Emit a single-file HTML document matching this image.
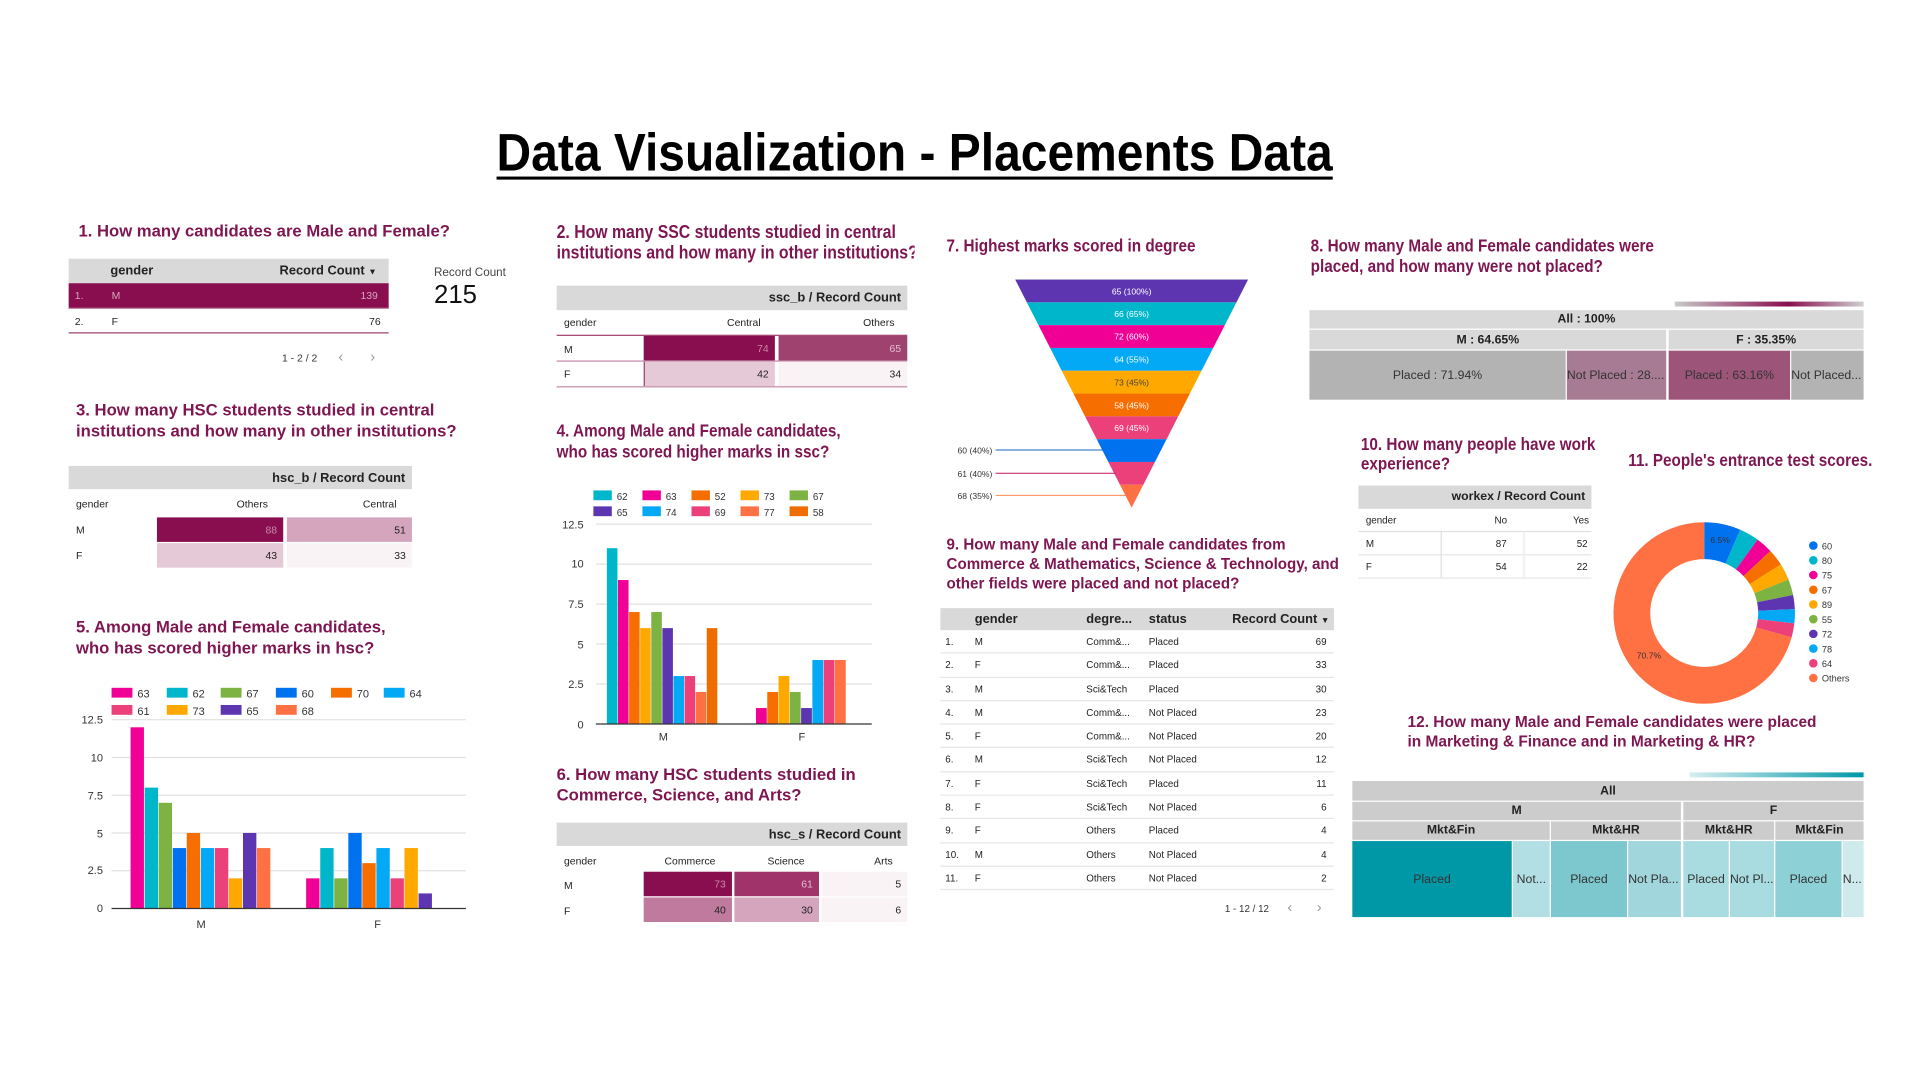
<!DOCTYPE html>
<html><head><meta charset="utf-8">
<style>
html,body{margin:0;padding:0;background:#fff;overflow:hidden;width:1920px;height:1080px}
#c{position:absolute;left:0;top:0;width:1566px;height:881px;transform:scale(1.22605);transform-origin:0 0;font-family:"Liberation Sans",Arial,sans-serif;color:#222}
.a{position:absolute;white-space:nowrap}
.h{position:absolute;color:#7e1651;font-weight:bold;font-size:13.6px;line-height:17px;white-space:nowrap}
.hc{transform:scaleX(0.86);transform-origin:0 0}
.hdr{position:absolute;background:#d9d9d9}
.t9{font-size:8.5px}
.b11{font-weight:bold;font-size:10.5px}
.r{text-align:right}
.cell{position:absolute;font-size:8.5px;text-align:right;box-sizing:border-box;padding-right:5px}
.tm{position:absolute;font-size:10px;color:#333;text-align:center;box-sizing:border-box;overflow:hidden;display:flex;align-items:center;justify-content:center}
</style></head><body>
<div id="c">
<svg class="a" style="left:0;top:0" width="1566" height="881" viewBox="0 0 1566 881" font-family="Liberation Sans, Arial, sans-serif">
<text x="405" y="139" font-size="43" font-weight="bold" textLength="682" lengthAdjust="spacingAndGlyphs" fill="#000">Data Visualization - Placements Data</text>
<rect x="405" y="144" width="682" height="2.5" fill="#000"/>

<g stroke="#e0e0e0" stroke-width="1">
<line x1="91" y1="587" x2="380" y2="587"/><line x1="91" y1="617.8" x2="380" y2="617.8"/><line x1="91" y1="648.6" x2="380" y2="648.6"/><line x1="91" y1="679.4" x2="380" y2="679.4"/><line x1="91" y1="710.2" x2="380" y2="710.2"/>
</g>
<g font-size="9" fill="#333" text-anchor="end">
<text x="84" y="590">12.5</text><text x="84" y="621">10</text><text x="84" y="652">7.5</text><text x="84" y="683">5</text><text x="84" y="713">2.5</text><text x="84" y="744">0</text>
</g>
<g>
<rect x="106.5" y="593.2" width="10.9" height="147.8" fill="#f10096"/>
<rect x="118" y="642.4" width="10.9" height="98.6" fill="#00b6cb"/>
<rect x="129.4" y="654.8" width="10.9" height="86.2" fill="#7cb342"/>
<rect x="140.9" y="691.7" width="10.9" height="49.3" fill="#0072f0"/>
<rect x="152.3" y="679.4" width="10.9" height="61.6" fill="#f66d00"/>
<rect x="163.8" y="691.7" width="10.9" height="49.3" fill="#03a9f4"/>
<rect x="175.3" y="691.7" width="10.9" height="49.3" fill="#ec407a"/>
<rect x="186.7" y="716.4" width="10.9" height="24.6" fill="#ffa800"/>
<rect x="198.2" y="679.4" width="10.9" height="61.6" fill="#5e35b1"/>
<rect x="209.6" y="691.7" width="10.9" height="49.3" fill="#ff7043"/>
<rect x="249.7" y="716.4" width="10.9" height="24.6" fill="#f10096"/>
<rect x="261.2" y="691.7" width="10.9" height="49.3" fill="#00b6cb"/>
<rect x="272.6" y="716.4" width="10.9" height="24.6" fill="#7cb342"/>
<rect x="284.1" y="679.4" width="10.9" height="61.6" fill="#0072f0"/>
<rect x="295.5" y="704" width="10.9" height="37" fill="#f66d00"/>
<rect x="307" y="691.7" width="10.9" height="49.3" fill="#03a9f4"/>
<rect x="318.5" y="716.4" width="10.9" height="24.6" fill="#ec407a"/>
<rect x="329.9" y="691.7" width="10.9" height="49.3" fill="#ffa800"/>
<rect x="341.4" y="728.7" width="10.9" height="12.3" fill="#5e35b1"/>
</g>
<line x1="91" y1="741" x2="380" y2="741" stroke="#333" stroke-width="1"/>
<g font-size="9" fill="#333" text-anchor="middle"><text x="164" y="757">M</text><text x="308" y="757">F</text></g>
<g font-size="9" fill="#333">
<rect x="91" y="561" width="17" height="8" fill="#f10096"/><text x="112" y="569">63</text>
<rect x="136" y="561" width="17" height="8" fill="#00b6cb"/><text x="157" y="569">62</text>
<rect x="180" y="561" width="17" height="8" fill="#7cb342"/><text x="201" y="569">67</text>
<rect x="225" y="561" width="17" height="8" fill="#0072f0"/><text x="246" y="569">60</text>
<rect x="270" y="561" width="17" height="8" fill="#f66d00"/><text x="291" y="569">70</text>
<rect x="313" y="561" width="17" height="8" fill="#03a9f4"/><text x="334" y="569">64</text>
<rect x="91" y="575" width="17" height="8" fill="#ec407a"/><text x="112" y="583">61</text>
<rect x="136" y="575" width="17" height="8" fill="#ffa800"/><text x="157" y="583">73</text>
<rect x="180" y="575" width="17" height="8" fill="#5e35b1"/><text x="201" y="583">65</text>
<rect x="225" y="575" width="17" height="8" fill="#ff7043"/><text x="246" y="583">68</text>
</g>

<g stroke="#e0e0e0" stroke-width="1">
<line x1="486" y1="427.5" x2="711" y2="427.5"/><line x1="486" y1="460.1" x2="711" y2="460.1"/><line x1="486" y1="492.7" x2="711" y2="492.7"/><line x1="486" y1="525.3" x2="711" y2="525.3"/><line x1="486" y1="557.9" x2="711" y2="557.9"/>
</g>
<g font-size="9" fill="#333" text-anchor="end">
<text x="476" y="431">12.5</text><text x="476" y="463">10</text><text x="476" y="496">7.5</text><text x="476" y="529">5</text><text x="476" y="561">2.5</text><text x="476" y="594">0</text>
</g>
<g>
<rect x="495" y="447.1" width="8.6" height="143.4" fill="#00b6cb"/>
<rect x="504.05" y="473.1" width="8.6" height="117.4" fill="#f10096"/>
<rect x="513.1" y="499.2" width="8.6" height="91.3" fill="#f66d00"/>
<rect x="522.15" y="512.3" width="8.6" height="78.2" fill="#ffa800"/>
<rect x="531.2" y="499.2" width="8.6" height="91.3" fill="#7cb342"/>
<rect x="540.25" y="512.3" width="8.6" height="78.2" fill="#5e35b1"/>
<rect x="549.3" y="551.4" width="8.6" height="39.1" fill="#03a9f4"/>
<rect x="558.35" y="551.4" width="8.6" height="39.1" fill="#ec407a"/>
<rect x="567.4" y="564.4" width="8.6" height="26.1" fill="#ff7043"/>
<rect x="576.45" y="512.3" width="8.6" height="78.2" fill="#ef6c00"/>
<rect x="616.6" y="577.5" width="8.8" height="13" fill="#f10096"/>
<rect x="625.8" y="564.4" width="8.8" height="26.1" fill="#f66d00"/>
<rect x="635" y="551.4" width="8.8" height="39.1" fill="#ffa800"/>
<rect x="644.2" y="564.4" width="8.8" height="26.1" fill="#7cb342"/>
<rect x="653.4" y="577.5" width="8.8" height="13" fill="#5e35b1"/>
<rect x="662.6" y="538.3" width="8.8" height="52.2" fill="#03a9f4"/>
<rect x="671.8" y="538.3" width="8.8" height="52.2" fill="#ec407a"/>
<rect x="681" y="538.3" width="8.8" height="52.2" fill="#ff7043"/>
</g>
<line x1="486" y1="590.5" x2="711" y2="590.5" stroke="#333"/>
<g font-size="9" fill="#333" text-anchor="middle"><text x="541" y="604">M</text><text x="654" y="604">F</text></g>
<g font-size="8" fill="#333">
<rect x="484" y="400" width="15" height="8" fill="#00b6cb"/><text x="503" y="408">62</text>
<rect x="524" y="400" width="15" height="8" fill="#f10096"/><text x="543" y="408">63</text>
<rect x="564" y="400" width="15" height="8" fill="#f66d00"/><text x="583" y="408">52</text>
<rect x="604" y="400" width="15" height="8" fill="#ffa800"/><text x="623" y="408">73</text>
<rect x="644" y="400" width="15" height="8" fill="#7cb342"/><text x="663" y="408">67</text>
<rect x="484" y="413" width="15" height="8" fill="#5e35b1"/><text x="503" y="421">65</text>
<rect x="524" y="413" width="15" height="8" fill="#03a9f4"/><text x="543" y="421">74</text>
<rect x="564" y="413" width="15" height="8" fill="#ec407a"/><text x="583" y="421">69</text>
<rect x="604" y="413" width="15" height="8" fill="#ff7043"/><text x="623" y="421">77</text>
<rect x="644" y="413" width="15" height="8" fill="#ef6c00"/><text x="663" y="421">58</text>
</g>

<defs><clipPath id="fc"><polygon points="828,228 1018,228 923,414"/></clipPath></defs>
<g clip-path="url(#fc)">
<rect x="820" y="228" width="210" height="18.6" fill="#5e35b1"/>
<rect x="820" y="246.6" width="210" height="18.6" fill="#00b6cb"/>
<rect x="820" y="265.2" width="210" height="18.6" fill="#f10096"/>
<rect x="820" y="283.8" width="210" height="18.6" fill="#03a9f4"/>
<rect x="820" y="302.4" width="210" height="18.6" fill="#ffa800"/>
<rect x="820" y="321" width="210" height="18.6" fill="#f66d00"/>
<rect x="820" y="339.6" width="210" height="18.6" fill="#ec407a"/>
<rect x="820" y="358.2" width="210" height="18.6" fill="#0072f0"/>
<rect x="820" y="376.8" width="210" height="18.6" fill="#ec407a"/>
<rect x="820" y="395.4" width="210" height="18.6" fill="#ff7043"/>
</g>
<g font-size="7" fill="#fff" text-anchor="middle">
<text x="923" y="240">65 (100%)</text><text x="923" y="258.5">66 (65%)</text><text x="923" y="277">72 (60%)</text><text x="923" y="295.7">64 (55%)</text><text x="923" y="314.3" fill="#444">73 (45%)</text><text x="923" y="333">58 (45%)</text><text x="923" y="351.5">69 (45%)</text>
</g>
<line x1="812" y1="367" x2="900" y2="367" stroke="#1565c0" stroke-width="0.8"/>
<line x1="812" y1="386" x2="910" y2="386" stroke="#c2185b" stroke-width="0.8"/>
<line x1="812" y1="404" x2="918" y2="404" stroke="#ff8a50" stroke-width="0.8"/>
<g font-size="7" fill="#333"><text x="781" y="370">60 (40%)</text><text x="781" y="389">61 (40%)</text><text x="781" y="407">68 (35%)</text></g>

<g fill="none" stroke-width="30" transform="rotate(-90 1390 500)">
<circle cx="1390" cy="500" r="59" stroke="#0072f0" stroke-dasharray="24.1 400" stroke-dashoffset="0"/>
<circle cx="1390" cy="500" r="59" stroke="#00b6cb" stroke-dasharray="13 400" stroke-dashoffset="-24.1"/>
<circle cx="1390" cy="500" r="59" stroke="#f10096" stroke-dasharray="11.1 400" stroke-dashoffset="-37.1"/>
<circle cx="1390" cy="500" r="59" stroke="#f66d00" stroke-dasharray="11.1 400" stroke-dashoffset="-48.2"/>
<circle cx="1390" cy="500" r="59" stroke="#ffa800" stroke-dasharray="11.1 400" stroke-dashoffset="-59.3"/>
<circle cx="1390" cy="500" r="59" stroke="#7cb342" stroke-dasharray="10.4 400" stroke-dashoffset="-70.4"/>
<circle cx="1390" cy="500" r="59" stroke="#5e35b1" stroke-dasharray="9.3 400" stroke-dashoffset="-80.8"/>
<circle cx="1390" cy="500" r="59" stroke="#03a9f4" stroke-dasharray="9.3 400" stroke-dashoffset="-90.1"/>
<circle cx="1390" cy="500" r="59" stroke="#ec407a" stroke-dasharray="9.3 400" stroke-dashoffset="-99.4"/>
<circle cx="1390" cy="500" r="59" stroke="#ff7043" stroke-dasharray="262.1 400" stroke-dashoffset="-108.7"/>
</g>
<g font-size="7" fill="#333"><text x="1395" y="443">6.5%</text><text x="1335" y="537">70.7%</text></g>
<g font-size="7.5" fill="#333">
<circle cx="1479" cy="445" r="3.5" fill="#0072f0"/><text x="1486" y="448">60</text>
<circle cx="1479" cy="457" r="3.5" fill="#00b6cb"/><text x="1486" y="460">80</text>
<circle cx="1479" cy="469" r="3.5" fill="#f10096"/><text x="1486" y="472">75</text>
<circle cx="1479" cy="481" r="3.5" fill="#f66d00"/><text x="1486" y="484">67</text>
<circle cx="1479" cy="493" r="3.5" fill="#ffa800"/><text x="1486" y="496">89</text>
<circle cx="1479" cy="505" r="3.5" fill="#7cb342"/><text x="1486" y="508">55</text>
<circle cx="1479" cy="517" r="3.5" fill="#5e35b1"/><text x="1486" y="520">72</text>
<circle cx="1479" cy="529" r="3.5" fill="#03a9f4"/><text x="1486" y="532">78</text>
<circle cx="1479" cy="541" r="3.5" fill="#ec407a"/><text x="1486" y="544">64</text>
<circle cx="1479" cy="553" r="3.5" fill="#ff7043"/><text x="1486" y="556">Others</text>
</g>
<defs>
<linearGradient id="g8"><stop offset="0" stop-color="#c9c9c9"/><stop offset="0.6" stop-color="#880e4f"/><stop offset="1" stop-color="#d0d0d0"/></linearGradient>
<linearGradient id="g12"><stop offset="0" stop-color="#d6eef0"/><stop offset="1" stop-color="#0097a7"/></linearGradient>
</defs>
<rect x="1366" y="246" width="154" height="4" fill="url(#g8)"/>
<rect x="1378" y="630" width="142" height="4" fill="url(#g12)"/>
</svg>

<div class="h" style="left:64px;top:180px">1. How many candidates are Male and Female?</div>
<div class="h" style="left:62px;top:326px">3. How many HSC students studied in central<br>institutions and how many in other institutions?</div>
<div class="h" style="left:62px;top:503px">5. Among Male and Female candidates,<br>who has scored higher marks in hsc?</div>
<div class="a" style="left:454px;top:181px;width:292px;height:36px;overflow:hidden"><div class="h hc" style="left:0;top:0;font-size:15px">2. How many SSC students studied in central<br>institutions and how many in other institutions?</div></div>
<div class="h hc" style="left:454px;top:344px;font-size:14.5px">4. Among Male and Female candidates,<br>who has scored higher marks in ssc?</div>
<div class="h" style="left:454px;top:623px">6. How many HSC students studied in<br>Commerce, Science, and Arts?</div>
<div class="h hc" style="left:772px;top:193px;font-size:14.5px">7. Highest marks scored in degree</div>
<div class="h hc" style="left:1069px;top:193px;font-size:14.5px">8. How many Male and Female candidates were<br>placed, and how many were not placed?</div>
<div class="h" style="left:772px;top:436px;font-size:13px;line-height:16px;transform:scaleX(0.95);transform-origin:0 0">9. How many Male and Female candidates from<br>Commerce &amp; Mathematics, Science &amp; Technology, and<br>other fields were placed and not placed?</div>
<div class="h hc" style="left:1110px;top:355px;font-size:14.5px;line-height:16px">10. How many people have work<br>experience?</div>
<div class="h hc" style="left:1328px;top:368px;font-size:14.5px">11. People's entrance test scores.</div>
<div class="h" style="left:1148px;top:581px;font-size:13px;line-height:16px;transform:scaleX(0.97);transform-origin:0 0">12. How many Male and Female candidates were placed<br>in Marketing &amp; Finance and in Marketing &amp; HR?</div>

<div class="hdr" style="left:56px;top:211px;width:261px;height:20px"></div>
<div class="a b11" style="left:90px;top:215px">gender</div>
<div class="a b11" style="left:228px;top:215px">Record Count <span style="font-size:7px">▼</span></div>
<div class="a" style="left:56px;top:231px;width:261px;height:20px;background:#880e4f;border-bottom:1px solid #c48aa8"></div>
<div class="a t9" style="left:61px;top:236px;color:#d7a6bf">1.</div><div class="a t9" style="left:91px;top:236px;color:#d7a6bf">M</div><div class="a t9" style="left:294px;top:236px;color:#d7a6bf">139</div>
<div class="a t9" style="left:61px;top:257px">2.</div><div class="a t9" style="left:91px;top:257px">F</div><div class="a t9" style="left:301px;top:257px">76</div>
<div class="a" style="left:56px;top:271px;width:261px;height:1px;background:#a0426f"></div>
<div class="a t9" style="left:230px;top:287px;color:#333">1 - 2 / 2</div>
<div class="a" style="left:276px;top:284px;font-size:12px;color:#999">‹</div><div class="a" style="left:302px;top:284px;font-size:12px;color:#999">›</div>
<div class="a" style="left:354px;top:217px;font-size:9.5px;color:#444">Record Count</div>
<div class="a" style="left:354px;top:229px;font-size:21px;color:#111">215</div>

<div class="hdr" style="left:56px;top:380px;width:280px;height:19px"></div>
<div class="a b11" style="left:222px;top:384px">hsc_b / Record Count</div>
<div class="a t9" style="left:62px;top:406px">gender</div>
<div class="a t9" style="left:193px;top:406px">Others</div><div class="a t9" style="left:296px;top:406px">Central</div>
<div class="a t9" style="left:62px;top:427px">M</div><div class="a t9" style="left:62px;top:448px">F</div>
<div class="cell" style="left:128px;top:422px;width:103px;height:20px;line-height:20px;background:#880e4f;color:#c98aaa">88</div>
<div class="cell" style="left:234px;top:422px;width:102px;height:20px;line-height:20px;background:#d4a5bd">51</div>
<div class="cell" style="left:128px;top:443px;width:103px;height:20px;line-height:20px;background:#e6c9d7">43</div>
<div class="cell" style="left:234px;top:443px;width:102px;height:20px;line-height:20px;background:#faf3f6">33</div>

<div class="hdr" style="left:454px;top:233px;width:286px;height:20px"></div>
<div class="a b11" style="left:627px;top:237px">ssc_b / Record Count</div>
<div class="a t9" style="left:460px;top:258px">gender</div>
<div class="a t9" style="left:593px;top:258px">Central</div><div class="a t9" style="left:704px;top:258px">Others</div>
<div class="a" style="left:454px;top:273px;width:286px;height:1px;background:#a0426f"></div>
<div class="a t9" style="left:460px;top:280px">M</div><div class="a t9" style="left:460px;top:300px">F</div>
<div class="cell" style="left:525px;top:274px;width:107px;height:20px;line-height:20px;background:#880e4f;color:#c98aaa">74</div>
<div class="cell" style="left:635px;top:274px;width:105px;height:20px;line-height:20px;background:#a0426f;color:#e2bfd1">65</div>
<div class="a" style="left:454px;top:294px;width:286px;height:1px;background:#c48aa8"></div>
<div class="cell" style="left:525px;top:295px;width:107px;height:20px;line-height:20px;background:#e6c9d7">42</div>
<div class="cell" style="left:635px;top:295px;width:105px;height:20px;line-height:20px;background:#faf3f6">34</div>
<div class="a" style="left:525px;top:295px;width:1px;height:20px;background:#a0426f"></div>
<div class="a" style="left:454px;top:315px;width:286px;height:1px;background:#c48aa8"></div>

<div class="hdr" style="left:454px;top:671px;width:286px;height:19px"></div>
<div class="a b11" style="left:627px;top:675px">hsc_s / Record Count</div>
<div class="a t9" style="left:460px;top:697px">gender</div>
<div class="a t9" style="left:542px;top:697px">Commerce</div><div class="a t9" style="left:626px;top:697px">Science</div><div class="a t9" style="left:713px;top:697px">Arts</div>
<div class="a t9" style="left:460px;top:717px">M</div><div class="a t9" style="left:460px;top:738px">F</div>
<div class="cell" style="left:525px;top:711px;width:72px;height:20px;line-height:20px;background:#880e4f;color:#c98aaa">73</div>
<div class="cell" style="left:599px;top:711px;width:69px;height:20px;line-height:20px;background:#a0346a;color:#e2bfd1">61</div>
<div class="cell" style="left:670px;top:711px;width:70px;height:20px;line-height:20px;background:#faf3f6">5</div>
<div class="cell" style="left:525px;top:732px;width:72px;height:20px;line-height:20px;background:#bf7a9e">40</div>
<div class="cell" style="left:599px;top:732px;width:69px;height:20px;line-height:20px;background:#d4a5bd">30</div>
<div class="cell" style="left:670px;top:732px;width:70px;height:20px;line-height:20px;background:#faf3f6">6</div>

<div class="tm" style="left:1068px;top:253px;width:452px;height:15px;background:#d9d9d9;font-weight:bold;color:#222">All : 100%</div>
<div class="tm" style="left:1068px;top:269px;width:291px;height:16px;background:#d9d9d9;font-weight:bold;color:#222">M : 64.65%</div>
<div class="tm" style="left:1361px;top:269px;width:159px;height:16px;background:#d9d9d9;font-weight:bold;color:#222">F : 35.35%</div>
<div class="tm" style="left:1068px;top:286px;width:209px;height:40px;background:#b3b3b3">Placed : 71.94%</div>
<div class="tm" style="left:1278px;top:286px;width:81px;height:40px;background:#a67b93;justify-content:flex-start">Not Placed : 28....</div>
<div class="tm" style="left:1361px;top:286px;width:99px;height:40px;background:#9c5579">Placed : 63.16%</div>
<div class="tm" style="left:1461px;top:286px;width:59px;height:40px;background:#b3b3b3;justify-content:flex-start">Not Placed...</div>

<div class="hdr" style="left:767px;top:496px;width:321px;height:18px"></div>
<div class="a b11" style="left:795px;top:499px">gender</div>
<div class="a b11" style="left:886px;top:499px">degre...</div>
<div class="a b11" style="left:937px;top:499px">status</div>
<div class="a b11" style="left:1005px;top:499px">Record Count <span style="font-size:7px">▼</span></div>
<div class="a" style="left:767px;top:514px;width:321px;font-size:8px;color:#222">
<div style="height:19.3px;border-bottom:1px solid #e6e6e6;position:relative;box-sizing:border-box"><span class="a" style="left:4px;top:5px">1.</span><span class="a" style="left:28px;top:5px">M</span><span class="a" style="left:119px;top:5px">Comm&amp;...</span><span class="a" style="left:170px;top:5px">Placed</span><span class="a" style="right:6px;top:5px">69</span></div>
<div style="height:19.3px;border-bottom:1px solid #e6e6e6;position:relative;box-sizing:border-box"><span class="a" style="left:4px;top:5px">2.</span><span class="a" style="left:28px;top:5px">F</span><span class="a" style="left:119px;top:5px">Comm&amp;...</span><span class="a" style="left:170px;top:5px">Placed</span><span class="a" style="right:6px;top:5px">33</span></div>
<div style="height:19.3px;border-bottom:1px solid #e6e6e6;position:relative;box-sizing:border-box"><span class="a" style="left:4px;top:5px">3.</span><span class="a" style="left:28px;top:5px">M</span><span class="a" style="left:119px;top:5px">Sci&amp;Tech</span><span class="a" style="left:170px;top:5px">Placed</span><span class="a" style="right:6px;top:5px">30</span></div>
<div style="height:19.3px;border-bottom:1px solid #e6e6e6;position:relative;box-sizing:border-box"><span class="a" style="left:4px;top:5px">4.</span><span class="a" style="left:28px;top:5px">M</span><span class="a" style="left:119px;top:5px">Comm&amp;...</span><span class="a" style="left:170px;top:5px">Not Placed</span><span class="a" style="right:6px;top:5px">23</span></div>
<div style="height:19.3px;border-bottom:1px solid #e6e6e6;position:relative;box-sizing:border-box"><span class="a" style="left:4px;top:5px">5.</span><span class="a" style="left:28px;top:5px">F</span><span class="a" style="left:119px;top:5px">Comm&amp;...</span><span class="a" style="left:170px;top:5px">Not Placed</span><span class="a" style="right:6px;top:5px">20</span></div>
<div style="height:19.3px;border-bottom:1px solid #e6e6e6;position:relative;box-sizing:border-box"><span class="a" style="left:4px;top:5px">6.</span><span class="a" style="left:28px;top:5px">M</span><span class="a" style="left:119px;top:5px">Sci&amp;Tech</span><span class="a" style="left:170px;top:5px">Not Placed</span><span class="a" style="right:6px;top:5px">12</span></div>
<div style="height:19.3px;border-bottom:1px solid #e6e6e6;position:relative;box-sizing:border-box"><span class="a" style="left:4px;top:5px">7.</span><span class="a" style="left:28px;top:5px">F</span><span class="a" style="left:119px;top:5px">Sci&amp;Tech</span><span class="a" style="left:170px;top:5px">Placed</span><span class="a" style="right:6px;top:5px">11</span></div>
<div style="height:19.3px;border-bottom:1px solid #e6e6e6;position:relative;box-sizing:border-box"><span class="a" style="left:4px;top:5px">8.</span><span class="a" style="left:28px;top:5px">F</span><span class="a" style="left:119px;top:5px">Sci&amp;Tech</span><span class="a" style="left:170px;top:5px">Not Placed</span><span class="a" style="right:6px;top:5px">6</span></div>
<div style="height:19.3px;border-bottom:1px solid #e6e6e6;position:relative;box-sizing:border-box"><span class="a" style="left:4px;top:5px">9.</span><span class="a" style="left:28px;top:5px">F</span><span class="a" style="left:119px;top:5px">Others</span><span class="a" style="left:170px;top:5px">Placed</span><span class="a" style="right:6px;top:5px">4</span></div>
<div style="height:19.3px;border-bottom:1px solid #e6e6e6;position:relative;box-sizing:border-box"><span class="a" style="left:4px;top:5px">10.</span><span class="a" style="left:28px;top:5px">M</span><span class="a" style="left:119px;top:5px">Others</span><span class="a" style="left:170px;top:5px">Not Placed</span><span class="a" style="right:6px;top:5px">4</span></div>
<div style="height:19.3px;border-bottom:1px solid #e6e6e6;position:relative;box-sizing:border-box"><span class="a" style="left:4px;top:5px">11.</span><span class="a" style="left:28px;top:5px">F</span><span class="a" style="left:119px;top:5px">Others</span><span class="a" style="left:170px;top:5px">Not Placed</span><span class="a" style="right:6px;top:5px">2</span></div>
</div>
<div class="a" style="left:999px;top:737px;font-size:8px;color:#333">1 - 12 / 12</div>
<div class="a" style="left:1050px;top:733px;font-size:12px;color:#999">‹</div><div class="a" style="left:1074px;top:733px;font-size:12px;color:#999">›</div>

<div class="hdr" style="left:1108px;top:396px;width:190px;height:19px"></div>
<div class="a b11" style="left:1184px;top:400px;font-size:10px">workex / Record Count</div>
<div class="a" style="left:1114px;top:420px;font-size:8px">gender</div>
<div class="a" style="left:1219px;top:420px;font-size:8px">No</div><div class="a" style="left:1283px;top:420px;font-size:8px">Yes</div>
<div class="a" style="left:1108px;top:433px;width:190px;height:1px;background:#e0e0e0"></div>
<div class="a" style="left:1108px;top:452px;width:190px;height:1px;background:#e6e6e6"></div>
<div class="a" style="left:1108px;top:471px;width:190px;height:1px;background:#e6e6e6"></div>
<div class="a" style="left:1175px;top:434px;width:1px;height:37px;background:#e0e0e0"></div>
<div class="a" style="left:1242px;top:434px;width:2px;height:37px;background:#f2f2f2"></div>
<div class="a" style="left:1114px;top:439px;font-size:8px">M</div><div class="a" style="left:1220px;top:439px;font-size:8px">87</div><div class="a" style="left:1286px;top:439px;font-size:8px">52</div>
<div class="a" style="left:1114px;top:458px;font-size:8px">F</div><div class="a" style="left:1220px;top:458px;font-size:8px">54</div><div class="a" style="left:1286px;top:458px;font-size:8px">22</div>

<div class="tm" style="left:1103px;top:637px;width:417px;height:16px;background:#cccccc;font-weight:bold;color:#222">All</div>
<div class="tm" style="left:1103px;top:654px;width:268px;height:15px;background:#cccccc;font-weight:bold;color:#222">M</div>
<div class="tm" style="left:1373px;top:654px;width:147px;height:15px;background:#cccccc;font-weight:bold;color:#222">F</div>
<div class="tm" style="left:1103px;top:670px;width:161px;height:15px;background:#cccccc;font-weight:bold;color:#222">Mkt&amp;Fin</div>
<div class="tm" style="left:1265px;top:670px;width:106px;height:15px;background:#cccccc;font-weight:bold;color:#222">Mkt&amp;HR</div>
<div class="tm" style="left:1373px;top:670px;width:74px;height:15px;background:#cccccc;font-weight:bold;color:#222">Mkt&amp;HR</div>
<div class="tm" style="left:1448px;top:670px;width:72px;height:15px;background:#cccccc;font-weight:bold;color:#222">Mkt&amp;Fin</div>
<div class="tm" style="left:1103px;top:686px;width:130px;height:62px;background:#0097a7">Placed</div>
<div class="tm" style="left:1234px;top:686px;width:30px;height:62px;background:#b2dfe4">Not...</div>
<div class="tm" style="left:1265px;top:686px;width:62px;height:62px;background:#7cc8ce">Placed</div>
<div class="tm" style="left:1328px;top:686px;width:43px;height:62px;background:#a0d6dc;justify-content:flex-start">Not Pla...</div>
<div class="tm" style="left:1373px;top:686px;width:37px;height:62px;background:#a8dce0">Placed</div>
<div class="tm" style="left:1411px;top:686px;width:36px;height:62px;background:#a8dce0;justify-content:flex-start">Not Pl...</div>
<div class="tm" style="left:1448px;top:686px;width:54px;height:62px;background:#8dd0d6">Placed</div>
<div class="tm" style="left:1503px;top:686px;width:17px;height:62px;background:#cfeaed;justify-content:flex-start">N...</div>
</div>
</body></html>
